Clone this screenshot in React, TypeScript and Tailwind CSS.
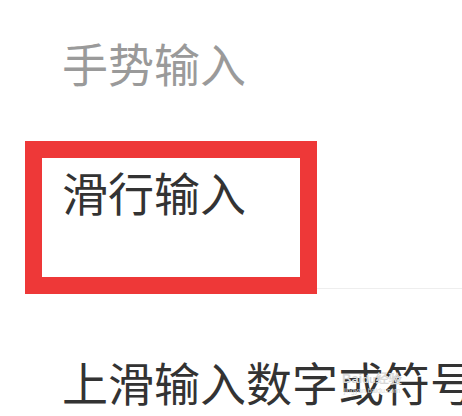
export default function App() {
  return (
    <div
      className="relative h-[416px] w-[462px] overflow-hidden bg-white"
      style={{ fontFamily: '"Noto Sans CJK SC", "Noto Sans", sans-serif' }}
    >
      <div className="h-[131px] pl-[62px] pt-[39px]">
        <p className="text-[46px] leading-none text-[#9a9a9a]">手势输入</p>
      </div>
      <div className="ml-[62px] h-[158px] border-b border-[#eeeeee] pt-[37px]">
        <p className="text-[46px] leading-none text-[#333333]">滑行输入</p>
      </div>
      <div className="pl-[62px] pt-[69px]">
        <p className="whitespace-nowrap text-[46px] leading-none text-[#333333]">
          上滑输入数字或符号
        </p>
      </div>

      {/* highlight box */}
      <div className="absolute left-[25px] top-[141px] h-[153px] w-[292px] border-[17px] border-[#ee3838]" />

      {/* watermark */}
      <div className="absolute left-[342px] top-[372px] flex flex-col items-center leading-none text-[#d8d8d8]">
        <span className="text-[13px] font-bold" style={{ fontFamily: '"Liberation Sans", sans-serif' }}>
          Bai<span className="text-[11px]">du</span>经验
        </span>
        <span className="mt-[2px] text-[7px]" style={{ fontFamily: '"Liberation Sans", sans-serif' }}>
          jingyan.baidu.com
        </span>
      </div>
    </div>
  );
}
